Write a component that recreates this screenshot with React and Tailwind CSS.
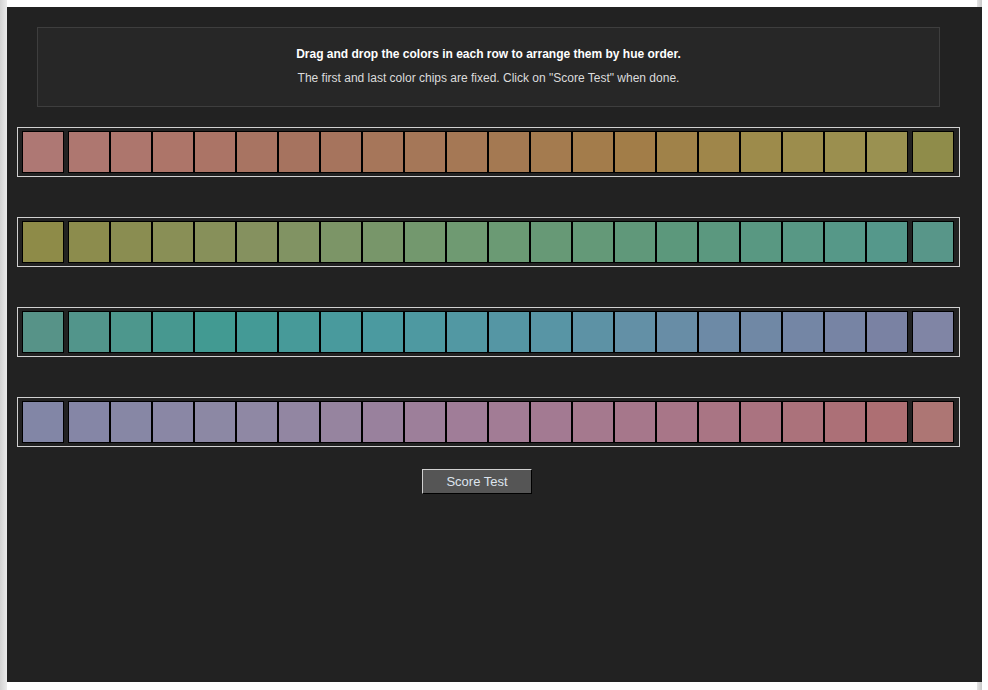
import React from "react";

// anchor colours per row: [index, hex]
const rowAnchors = [
  [[0, "#ae7874"], [3, "#ad7569"], [6, "#a6735f"], [10, "#a57855"], [14, "#a27d48"], [17, "#9d8b4b"], [20, "#9a9151"], [21, "#8f8c4a"]],
  [[0, "#8e8b48"], [5, "#85915f"], [10, "#6f9a72"], [15, "#5c987c"], [20, "#55988b"], [21, "#589689"]],
  [[0, "#579388"], [4, "#429a92"], [8, "#4b9aa0"], [12, "#5895a5"], [16, "#6d8aa6"], [20, "#7a82a3"], [21, "#8085a5"]],
  [[0, "#8286a6"], [5, "#8f88a4"], [10, "#a07d98"], [15, "#a87688"], [20, "#ad6f73"], [21, "#ad7674"]],
];

const hexToRgb = (h) => [1, 3, 5].map((i) => parseInt(h.slice(i, i + 2), 16));

function buildRow(anchors) {
  const out = [];
  for (let i = 0; i < 22; i++) {
    let k = 0;
    while (k < anchors.length - 2 && anchors[k + 1][0] < i) k++;
    const [i0, c0] = anchors[k];
    const [i1, c1] = anchors[k + 1];
    const t = i1 === i0 ? 0 : Math.min(1, Math.max(0, (i - i0) / (i1 - i0)));
    const a = hexToRgb(c0);
    const b = hexToRgb(c1);
    const rgb = a.map((v, j) => Math.round(v + (b[j] - v) * t));
    out.push(`rgb(${rgb.join(",")})`);
  }
  return out;
}

const rows = rowAnchors.map(buildRow);

function Chip({ color }) {
  return <div className="w-[42px] h-[42px] border border-black shrink-0" style={{ backgroundColor: color }} />;
}

function ChipRow({ colors }) {
  const first = colors[0];
  const last = colors[colors.length - 1];
  const movable = colors.slice(1, -1);
  return (
    <div className="ml-[10px] w-[943px] h-[50px] border border-[#d0d0d0] flex items-center px-[4px] gap-[4px]">
      <Chip color={first} />
      <div className="flex">
        {movable.map((c, idx) => (
          <Chip key={idx} color={c} />
        ))}
      </div>
      <Chip color={last} />
    </div>
  );
}

export default function App() {
  return (
    <div className="flex h-[690px] bg-white overflow-hidden" style={{ fontFamily: '"Liberation Sans", Arial, sans-serif' }}>
      <div className="w-[7px] h-full bg-gradient-to-r from-[#d4d4d4] to-[#ececec]" />
      <div className="flex flex-col w-[975px]">
        <div className="h-[7px] flex justify-end">
          <div className="w-[5px] h-full bg-gradient-to-r from-[#e4e4e4] to-[#c8c8c8]" />
        </div>
        <div className="h-[675px] bg-[#222222] pt-[20px] flex flex-col">
          <div className="ml-[30px] w-[903px] h-[80px] bg-[#272727] border border-[#3e3e3e] pt-[18px] flex flex-col items-center">
            <div className="text-[12px] leading-[16px] font-bold text-white">
              Drag and drop the colors in each row to arrange them by hue order.
            </div>
            <div className="mt-[8px] text-[12px] leading-[16px] text-[#dcdcdc]">
              The first and last color chips are fixed. Click on "Score Test" when done.
            </div>
          </div>
          <div className="mt-[20px] flex flex-col gap-[40px]">
            {rows.map((r, idx) => (
              <ChipRow key={idx} colors={r} />
            ))}
          </div>
          <div className="mt-[22px] ml-[415px]">
            <button className="w-[110px] h-[25px] bg-[#555555] border border-t-[#d0d0d0] border-l-[#d0d0d0] border-b-black border-r-black text-[13px] text-[#dde4ee] leading-none">
              Score Test
            </button>
          </div>
        </div>
        <div className="flex-1 flex justify-end">
          <div className="w-[5px] h-full bg-gradient-to-r from-[#e4e4e4] to-[#c8c8c8]" />
        </div>
      </div>
    </div>
  );
}
